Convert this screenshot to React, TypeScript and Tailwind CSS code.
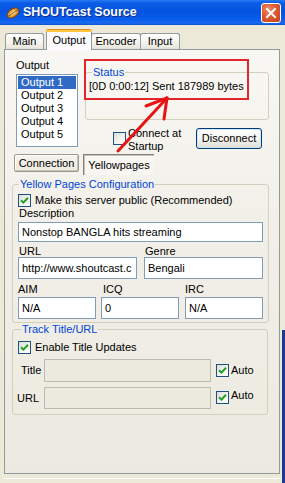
import React from "react";

function Check({ checked }: { checked?: boolean }) {
  return (
    <div className="w-[13px] h-[13px] shrink-0 border border-[#1C5180] bg-[linear-gradient(135deg,#DCDCD7_0%,#F5F5F3_60%,#FFFFFF_100%)] flex items-center justify-center">
      {checked && (
        <svg width="9" height="9" viewBox="0 0 9 9">
          <path d="M1 4.2 L3.4 6.6 L8 1.8" fill="none" stroke="#21A121" strokeWidth="2" />
        </svg>
      )}
    </div>
  );
}

function Field({ w, h, text, disabled }: { w: string; h: string; text?: string; disabled?: boolean }) {
  return (
    <div
      className={`${w} ${h} border ${disabled ? "border-[#BDBBAE] bg-[#ECEADF]" : "border-[#7F9DB9] bg-white"} flex items-center pl-[3px] overflow-hidden whitespace-nowrap text-black`}
    >
      {text}
    </div>
  );
}

export default function App() {
  return (
    <div className="relative w-[285px] h-[483px] overflow-hidden bg-[#ECE9D8] font-['Liberation_Sans',Arial,sans-serif] text-[11px] leading-[13px] text-black">
      {/* Title bar */}
      <div className="h-[25px] flex items-center pl-[5px] bg-[linear-gradient(180deg,#2A7BF5_0%,#0A5CE6_12%,#0553E0_45%,#0A5EEC_80%,#1B6BF0_92%,#0A4FD6_100%)]">
        <svg width="16" height="16" viewBox="0 0 16 16" className="shrink-0">
          <g transform="rotate(-35 8 8)">
            <ellipse cx="8" cy="8" rx="6.5" ry="4" fill="#E49A3A" stroke="#7A4A12" strokeWidth="1" />
            <ellipse cx="8" cy="8" rx="3.5" ry="1.8" fill="#F7D27A" />
            <line x1="2" y1="8" x2="14" y2="8" stroke="#7A4A12" strokeWidth="0.8" />
          </g>
        </svg>
        <span className="ml-[2px] text-white font-bold text-[12.5px] leading-[15px] [text-shadow:1px_1px_0_#0A2A8A]">
          SHOUTcast Source
        </span>
        <div className="ml-auto mr-[4px] w-[20px] h-[20px] rounded-[3px] border border-white bg-[radial-gradient(circle_at_35%_30%,#F08A6A_0%,#DE5A32_45%,#C5401A_100%)] flex items-center justify-center">
          <svg width="12" height="12" viewBox="0 0 12 12">
            <path d="M2 2 L10 10 M10 2 L2 10" stroke="white" strokeWidth="2" strokeLinecap="square" />
          </svg>
        </div>
      </div>

      <div className="pl-[4px]">
        {/* Tabs */}
        <div className="h-[24px] flex items-end pl-[1px]">
          <div className="w-[39px] h-[16px] border border-b-0 border-[#919B9C] rounded-t-[3px] bg-[linear-gradient(180deg,#FFFFFF_0%,#F3F2EC_60%,#E6E4DA_100%)] flex items-center justify-center">
            Main
          </div>
          <div className="relative z-10 ml-[2px] -mb-[1px] w-[46px] h-[21px] border-x border-[#919B9C] rounded-t-[3px] bg-[#FCFCFE] flex flex-col">
            <div className="h-[3px] rounded-t-[3px] bg-[linear-gradient(180deg,#E68B2C_0%,#E68B2C_33%,#FFC73C_34%,#FFC73C_100%)] -mx-[1px]" />
            <div className="flex-1 flex items-center justify-center pb-[2px]">Output</div>
          </div>
          <div className="w-[50px] -ml-[1px] h-[16px] border border-b-0 border-[#919B9C] rounded-t-[3px] bg-[linear-gradient(180deg,#FFFFFF_0%,#F3F2EC_60%,#E6E4DA_100%)] flex items-center justify-center">
            Encoder
          </div>
          <div className="w-[40px] -ml-[1px] h-[16px] border border-b-0 border-[#919B9C] rounded-t-[3px] bg-[linear-gradient(180deg,#FFFFFF_0%,#F3F2EC_60%,#E6E4DA_100%)] flex items-center justify-center">
            Input
          </div>
        </div>

        {/* Panel */}
        <div className="w-[276px] h-[425px] border border-[#919B9C] bg-[linear-gradient(180deg,#F8F7F3_0%,#F0EEE6_50%,#ECEAE0_100%)]">
          {/* Row 1 */}
          <div className="h-[104px] flex items-start">
            <div className="ml-[11px] pt-[9px]">
              <div className="h-[13px]">Output</div>
              <div className="mt-[2px] w-[62px] h-[73px] border border-[#7F9DB9] bg-white p-[1px]">
                <div className="h-[13px] bg-[#316AC5] text-white pl-[3px]">Output 1</div>
                <div className="h-[13px] pl-[3px]">Output 2</div>
                <div className="h-[13px] pl-[3px]">Output 3</div>
                <div className="h-[13px] pl-[3px]">Output 4</div>
                <div className="h-[13px] pl-[3px]">Output 5</div>
              </div>
            </div>
            <div className="ml-[7px] pt-[16px] w-[184px]">
              <fieldset className="w-[184px] h-[54px] border border-[#D0D0BF] rounded-[3px]">
                <legend className="ml-[6px] px-[1px] text-[#0046D5] leading-[13px]">Status</legend>
                <div className="mt-[1px] pl-[3px] whitespace-nowrap">[0D 0:00:12] Sent 187989 bytes</div>
              </fieldset>
              <div className="mt-[8px] flex items-start">
                <div className="ml-[28px] mt-[4px]">
                  <Check />
                </div>
                <div className="ml-[2px] -mt-[1px] leading-[13px]">
                  <div>Connect at</div>
                  <div>Startup</div>
                </div>
                <div className="ml-auto mr-[7px] w-[66px] h-[21px] rounded-[3px] border border-[#003C74] bg-[linear-gradient(180deg,#FFFFFF_0%,#F4F4F0_50%,#E3E2DA_90%,#D6D0C5_100%)] flex items-center justify-center shadow-[inset_0_0_0_1px_#CEE7FF]">
                  Disconnect
                </div>
              </div>
            </div>
          </div>

          {/* Row 2 */}
          <div className="h-[21px] flex items-start ml-[9px]">
            <div className="w-[65px] h-[18px] rounded-[2px] border border-[#9A9A90] bg-[linear-gradient(180deg,#F4F3EE_0%,#ECE9DE_100%)] flex items-center justify-center shadow-[inset_-1px_-1px_0_#C8C5B6,inset_1px_1px_0_#FFFFFF]">
              Connection
            </div>
            <div className="ml-[4px] w-[71px] h-[21px] border-l border-t border-[#808078] bg-[#F7F6F2] flex items-center justify-center shadow-[inset_1px_1px_0_#C8C5B6]">
              Yellowpages
            </div>
          </div>

          {/* Yellow Pages Configuration */}
          <fieldset className="mt-[3px] ml-[7px] w-[257px] h-[145px] border border-[#D0D0BF] rounded-[3px]">
            <legend className="ml-[6px] px-[1px] text-[#0046D5] leading-[13px]">Yellow Pages Configuration</legend>
            <div className="mt-[2px] h-[14px] pl-[5px] flex items-center">
              <Check checked />
              <span className="ml-[4px]">Make this server public (Recommended)</span>
            </div>
            <div className="h-[13px] pl-[6px]">Description</div>
            <div className="mt-[2px] ml-[5px]">
              <Field w="w-[245px]" h="h-[20px]" text="Nonstop BANGLA hits streaming" />
            </div>
            <div className="mt-[3px] h-[12px] flex">
              <div className="w-[132px] pl-[6px]">URL</div>
              <div>Genre</div>
            </div>
            <div className="ml-[5px] flex">
              <Field w="w-[119px]" h="h-[22px]" text="http://www.shoutcast.c" />
              <div className="ml-[7px]">
                <Field w="w-[119px]" h="h-[22px]" text="Bengali" />
              </div>
            </div>
            <div className="mt-[4px] h-[13px] flex">
              <div className="w-[90px] pl-[5px]">AIM</div>
              <div className="w-[82px]">ICQ</div>
              <div>IRC</div>
            </div>
            <div className="mt-[1px] ml-[5px] flex">
              <Field w="w-[78px]" h="h-[22px]" text="N/A" />
              <div className="ml-[5px]">
                <Field w="w-[78px]" h="h-[22px]" text="0" />
              </div>
              <div className="ml-[6px]">
                <Field w="w-[78px]" h="h-[22px]" text="N/A" />
              </div>
            </div>
          </fieldset>

          {/* Track Title/URL */}
          <fieldset className="ml-[7px] w-[256px] h-[92px] border border-[#D0D0BF] rounded-[3px]">
            <legend className="ml-[8px] px-[1px] text-[#0046D5] leading-[13px]">Track Title/URL</legend>
            <div className="mt-[4px] h-[14px] pl-[5px] flex items-center">
              <Check checked />
              <span className="ml-[4px]">Enable Title Updates</span>
            </div>
            <div className="mt-[5px] h-[23px] flex items-center">
              <div className="w-[31px] pl-[8px]">Title</div>
              <Field w="w-[167px]" h="h-[23px]" disabled />
              <div className="ml-[5px]">
                <Check checked />
              </div>
              <span className="ml-[2px]">Auto</span>
            </div>
            <div className="mt-[5px] h-[22px] flex items-start">
              <div className="w-[31px] pl-[4px] self-center">URL</div>
              <Field w="w-[167px]" h="h-[22px]" disabled />
              <div className="ml-[5px] mt-[4px]">
                <Check checked />
              </div>
              <span className="ml-[2px] mt-[2px]">Auto</span>
            </div>
          </fieldset>
        </div>

        <div className="mt-[4px] h-[1px] bg-white w-[277px]" />
      </div>

      {/* right frame edge */}
      <div className="absolute right-0 top-[330px] bottom-0 w-[3px] bg-[#1A3C8E]" />

      {/* red annotation rectangle */}
      <div className="absolute left-[84px] top-[59px] w-[165px] h-[41px] border-2 border-[#E3262B]" />
      {/* red arrow */}
      <svg className="absolute left-0 top-0 pointer-events-none" width="285" height="483" viewBox="0 0 285 483">
        <g stroke="#E81414" strokeWidth="3" strokeLinecap="round" fill="none">
          <path d="M118 151 L167 98" />
          <path d="M167 98 L146 106" />
          <path d="M167 98 L164 119" />
        </g>
      </svg>
    </div>
  );
}
